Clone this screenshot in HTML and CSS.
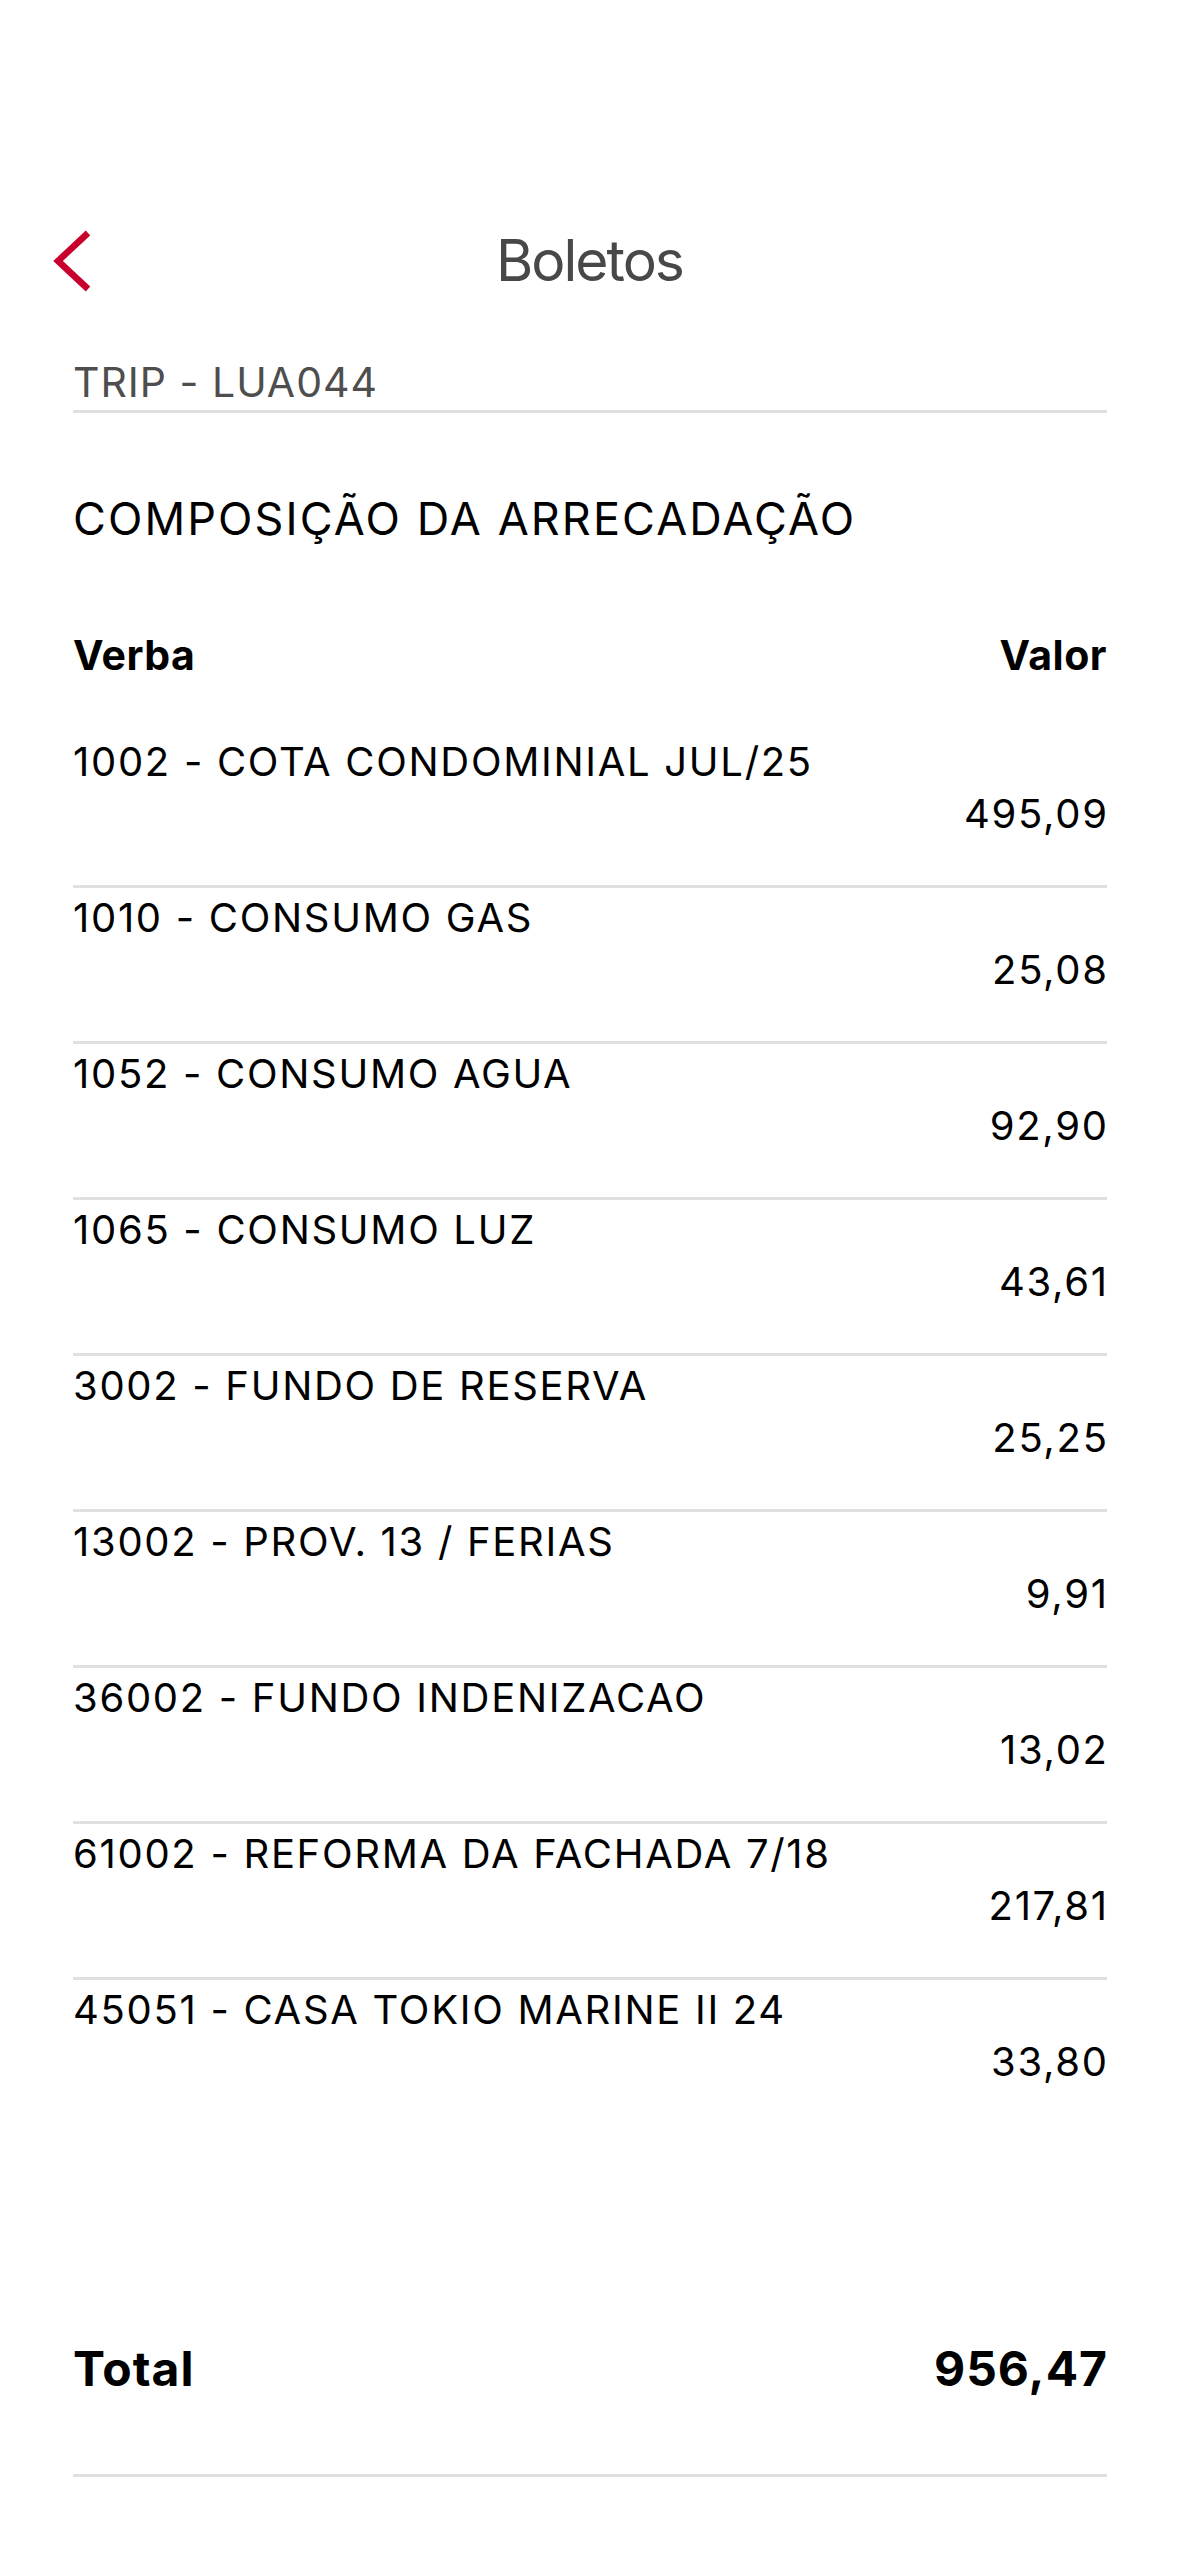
FILE: index.html
```html
<!DOCTYPE html>
<html lang="pt-BR">
<head>
<meta charset="utf-8">
<title>Boletos</title>
<link rel="stylesheet" href="styles.css">
</head>
<body>
<div class="screen">
  <header class="nav">
    <a class="back" href="#" aria-label="Voltar">
      <svg width="40" height="62" viewBox="0 0 40 62"><polyline points="35,3 5,31 35,59" fill="none" stroke="#c8002d" stroke-width="6.5" stroke-linecap="butt" stroke-linejoin="miter"/></svg>
    </a>
    <h1 class="title">Boletos</h1>
    <span></span>
  </header>

  <main class="content">
    <div class="unit">TRIP - LUA044</div>
    <h2 class="section">COMPOSIÇÃO DA ARRECADAÇÃO</h2>

    <div class="head">
      <span>Verba</span>
      <span>Valor</span>
    </div>

    <ul class="items">
      <li class="item"><span class="label">1002 - COTA CONDOMINIAL JUL/25</span><span class="value">495,09</span></li>
      <li class="item"><span class="label">1010 - CONSUMO GAS</span><span class="value">25,08</span></li>
      <li class="item"><span class="label">1052 - CONSUMO AGUA</span><span class="value">92,90</span></li>
      <li class="item"><span class="label">1065 - CONSUMO LUZ</span><span class="value">43,61</span></li>
      <li class="item"><span class="label">3002 - FUNDO DE RESERVA</span><span class="value">25,25</span></li>
      <li class="item"><span class="label">13002 - PROV. 13 / FERIAS</span><span class="value">9,91</span></li>
      <li class="item"><span class="label">36002 - FUNDO INDENIZACAO</span><span class="value">13,02</span></li>
      <li class="item"><span class="label">61002 - REFORMA DA FACHADA 7/18</span><span class="value">217,81</span></li>
      <li class="item"><span class="label">45051 - CASA TOKIO MARINE II 24</span><span class="value">33,80</span></li>
    </ul>

    <div class="total">
      <span>Total</span>
      <span>956,47</span>
    </div>
  </main>
</div>
</body>
</html>
```

FILE: styles.css
```css
* { box-sizing: border-box; }
html, body { margin: 0; padding: 0; background: #fff; }
body {
  font-family: Inter, "Noto Sans", "Liberation Sans", sans-serif;
  color: #000;
  width: 1179px;
  min-height: 2556px;
}
.screen { padding-top: 200px; }

.nav {
  height: 122px;
  display: grid;
  grid-template-columns: 1fr auto 1fr;
  align-items: center;
  padding: 0 53px;
}
.back { display: flex; width: 40px; height: 62px; }
.title {
  margin: 0;
  font-size: 57px;
  font-weight: 400;
  line-height: 70px;
  color: #484848;
  letter-spacing: -2px;
}

.content { padding: 0 72px 0 73px; }

.unit {
  margin-top: 35px;
  font-size: 41px;
  line-height: 50px;
  color: #4e4e4e;
  letter-spacing: 1px;
  padding-bottom: 3px;
  border-bottom: 3px solid #e0e0e0;
}

.section {
  margin: 79px 0 0;
  font-size: 45px;
  font-weight: 400;
  line-height: 54px;
  letter-spacing: 2.1px;
}

.head {
  margin-top: 84px;
  display: flex;
  justify-content: space-between;
  font-size: 41px;
  font-weight: 700;
  line-height: 50px;
  letter-spacing: 0.5px;
}

.items { list-style: none; margin: 52px 0 0; padding: 0; }
.item {
  display: flex;
  flex-direction: column;
  padding: 4px 0 45px;
  border-bottom: 3px solid #e0e0e0;
  font-size: 40px;
  line-height: 52px;
  letter-spacing: 1.7px;
}
.item:last-child { border-bottom: none; }
.value { align-self: flex-end; margin-right: -1.7px; }

.total {
  margin-top: 207px;
  display: flex;
  justify-content: space-between;
  font-size: 48px;
  font-weight: 700;
  line-height: 58px;
  letter-spacing: 1px;
  padding-bottom: 76px;
  border-bottom: 3px solid #e0e0e0;
}
.total span:last-child { margin-right: -1px; }
```
